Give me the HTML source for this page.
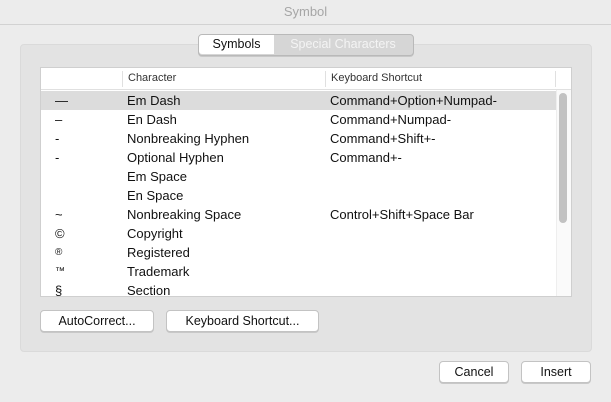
<html><head><style>
body{margin:0;width:611px;height:402px;background:#ececec;font-family:"Liberation Sans",sans-serif;position:relative;overflow:hidden}
.a{position:absolute}
.title{left:0;top:0;width:611px;height:24px;border-bottom:1px solid #d2d2d2;text-align:center;line-height:24px;font-size:13px;color:#a6a6a6;background:#ececec}
.group{left:20px;top:44px;width:570px;height:306px;background:#e3e3e3;border:1px solid #dadada;border-radius:4px}
.tab{top:35px;height:19px;font-size:12.5px;line-height:19px;text-align:center}
.table{left:40px;top:67px;width:530px;height:228px;background:#fff;border:1px solid #cfcfcf;overflow:hidden}
.hdr{position:absolute;top:0;height:21px;font-size:11px;color:#333;line-height:21px}
.row{position:absolute;left:0;width:515px;height:19px;font-size:13px;line-height:19px;color:#111}
.row span{position:absolute}
.btn{height:20px;background:#fff;border:1px solid #c3c3c3;border-radius:4px;font-size:12.5px;text-align:center;line-height:20px;color:#111;box-shadow:0 1px 0 #c8c8c8}
</style></head><body>
<div class="a title">Symbol</div>
<div class="a group"></div>
<div class="a" style="left:198px;top:34px;width:214px;height:20px;border:1px solid #b9b9b9;border-radius:4px;background:#d6d6d6;box-shadow:0 1px 0 #c8c8c8"></div>
<div class="a tab" style="left:199px;top:35px;width:75px;background:#fff;border-radius:3px 0 0 3px;color:#111">Symbols</div>
<div class="a tab" style="left:274px;width:138px;color:#f4f4f4">Special Characters</div>
<div class="a table">
<div class="hdr" style="left:0;width:530px;border-bottom:1px solid #e0e0e0;height:21px"></div>
<div class="a" style="left:81px;top:3px;width:1px;height:16px;background:#e0e0e0"></div>
<div class="a" style="left:284px;top:3px;width:1px;height:16px;background:#e0e0e0"></div>
<div class="a" style="left:514px;top:3px;width:1px;height:16px;background:#e0e0e0"></div>
<div class="hdr" style="left:87px">Character</div>
<div class="hdr" style="left:290px">Keyboard Shortcut</div>
<div class="row" style="top:23px;background:#dcdcdc"><span style="left:14px">—</span><span style="left:86px">Em Dash</span><span style="left:289px">Command+Option+Numpad-</span></div>
<div class="row" style="top:42px"><span style="left:14px">–</span><span style="left:86px">En Dash</span><span style="left:289px">Command+Numpad-</span></div>
<div class="row" style="top:61px"><span style="left:14px">-</span><span style="left:86px">Nonbreaking Hyphen</span><span style="left:289px">Command+Shift+-</span></div>
<div class="row" style="top:80px"><span style="left:14px">-</span><span style="left:86px">Optional Hyphen</span><span style="left:289px">Command+-</span></div>
<div class="row" style="top:99px"><span style="left:86px">Em Space</span></div>
<div class="row" style="top:118px"><span style="left:86px">En Space</span></div>
<div class="row" style="top:137px"><span style="left:14px">~</span><span style="left:86px">Nonbreaking Space</span><span style="left:289px">Control+Shift+Space Bar</span></div>
<div class="row" style="top:156px"><span style="left:14px">©</span><span style="left:86px">Copyright</span></div>
<div class="row" style="top:175px"><span style="left:14px;font-size:10px">®</span><span style="left:86px">Registered</span></div>
<div class="row" style="top:194px"><span style="left:14px;font-size:10px">™</span><span style="left:86px">Trademark</span></div>
<div class="row" style="top:213px"><span style="left:14px">§</span><span style="left:86px">Section</span></div>
<div class="a" style="left:515px;top:22px;width:15px;height:206px;background:#fafafa;border-left:1px solid #eee"></div>
<div class="a" style="left:518px;top:25px;width:8px;height:130px;background:#c2c2c2;border-radius:4px"></div>
</div>
<div class="a btn" style="left:40px;top:310px;width:112px">AutoCorrect...</div>
<div class="a btn" style="left:166px;top:310px;width:151px">Keyboard Shortcut...</div>
<div class="a btn" style="left:439px;top:361px;width:68px">Cancel</div>
<div class="a btn" style="left:521px;top:361px;width:68px">Insert</div>
</body></html>
